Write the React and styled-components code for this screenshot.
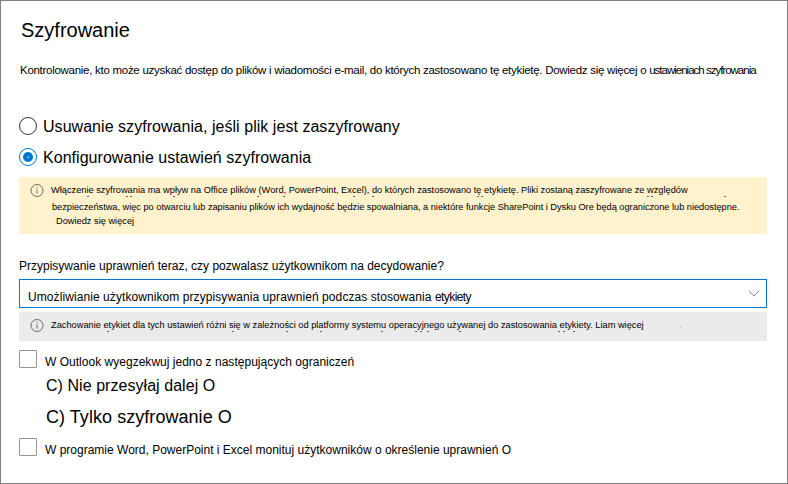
import React from 'react';
import styled, { createGlobalStyle } from 'styled-components';

const GlobalStyle = createGlobalStyle`
  * { box-sizing: border-box; }
  body { margin: 0; background: #fff; }
`;

const Panel = styled.main`
  display: flex;
  flex-direction: column;
  width: 788px;
  height: 484px;
  padding: 17px 20px 0 18px;
  border: 1px solid #808080;
  background: #fff;
  color: #000;
  font-family: 'Liberation Sans', Arial, sans-serif;
  font-size: 12px;
  overflow: hidden;
`;

const Title = styled.h1`
  margin: 0 0 0 2px;
  font-size: 20px;
  font-weight: 400;
  line-height: 24px;
`;

const Text = styled.span`
  font-size: ${(p) => p.$size || 12}px;
  letter-spacing: ${(p) => p.$spacing || 0}px;
  white-space: pre;
`;

const Description = styled.p`
  height: 14px;
  margin: 21px 0 0 1px;
  line-height: 14px;
  font-size: 11.5px;
`;

const RadioGroup = styled.div`
  display: flex;
  flex-direction: column;
  gap: 11px;
  margin-top: 39px;
`;

const RadioRow = styled.label`
  display: flex;
  align-items: center;
  gap: 6px;
  height: 20px;
`;

const RadioLabel = styled(Text)`
  padding-top: 2px;
`;

const RadioIcon = styled.svg`
  width: 18px;
  height: 18px;
  flex: none;
`;

const Notice = styled.section`
  display: flex;
  gap: 7px;
  position: relative;
  flex: none;
  height: ${(p) => p.$height}px;
  margin-top: ${(p) => p.$top}px;
  padding: 6px 0 0 11px;
  background: ${(p) => p.$background};
  font-size: 9.25px;
`;

const InfoIcon = styled.svg`
  width: 14px;
  height: 14px;
  flex: none;
  color: #605e5c;
`;

const NoticeBody = styled.div`
  display: flex;
  flex-direction: column;
`;

const NoticeLine = styled.div`
  height: ${(p) => p.$height || 14}px;
  line-height: 14px;
  padding-left: ${(p) => p.$indent || 0}px;
`;

const Marks = styled.svg`
  position: absolute;
  left: 0;
  top: 0;
  width: 748px;
  height: 28px;
`;

const Question = styled.div`
  height: 14px;
  margin-top: 25px;
  line-height: 14px;
`;

const Select = styled.div`
  display: flex;
  justify-content: space-between;
  flex: none;
  height: 29px;
  margin-top: 6px;
  padding: 0 6px 0 8px;
  border: 1px solid #0078d4;
`;

const SelectValue = styled.div`
  padding-top: 10px;
  line-height: 14px;
`;

const Chevron = styled.svg`
  width: 12px;
  height: 7px;
  margin-top: 10px;
`;

const CheckRow = styled.label`
  display: flex;
  align-items: flex-start;
  gap: 8px;
  height: 19px;
  margin-top: ${(p) => p.$top}px;
`;

const CheckBox = styled.span`
  width: 18px;
  height: 18px;
  flex: none;
  border: 1px solid #979593;
  border-radius: 1px;
`;

const CheckLabel = styled.span`
  padding-top: 5px;
  line-height: 14px;
`;

const Option = styled.div`
  margin: ${(p) => p.$top}px 0 0 27px;
  height: 20px;
  line-height: 20px;
`;

const Radio = ({ checked }) => (
  <RadioIcon viewBox="0 0 18 18">
    <circle cx="9" cy="9" r="8.5" fill="#fff" stroke={checked ? '#0078d4' : '#323130'} />
    {checked && <circle cx="9" cy="9" r="5" fill="#0078d4" />}
    {checked && <circle cx="9.3" cy="9.3" r="0.7" fill="#fff" />}
  </RadioIcon>
);

const Info = () => (
  <InfoIcon viewBox="0 0 14 14" fill="none" stroke="currentColor">
    <circle cx="7" cy="7.5" r="6" strokeWidth="0.9" />
    <path d="M7 6.5v4.2M7 4.2v1.2" strokeWidth="0.9" />
  </InfoIcon>
);

const Flecks = ({ y, points, dot }) => (
  <Marks viewBox="0 0 748 28" aria-hidden="true">
    {points.map((x) => (
      <rect key={x} x={x} y={y} width="2" height="1" fill="#000" opacity="0.6" />
    ))}
    {dot && <rect x={dot} y="14" width="1" height="2" fill="#a9d3f2" />}
  </Marks>
);

export default function App() {
  return (
    <>
      <GlobalStyle />
      <Panel>
        <Title>Szyfrowanie</Title>
        <Description>
          <Text $size={11.5} $spacing={-0.28}>
            {'Kontrolowanie, kto może uzyskać dostęp do plików i wiadomości e-mail, do których zastosowano tę etykietę. Dowiedz się więcej o '}
          </Text>
          <Text $size={11.5} $spacing={-1}>ustawieniach szyfrowania</Text>
        </Description>
        <RadioGroup>
          <RadioRow>
            <Radio />
            <RadioLabel $size={16} $spacing={0.04}>Usuwanie szyfrowania, jeśli plik jest zaszyfrowany</RadioLabel>
          </RadioRow>
          <RadioRow>
            <Radio checked />
            <RadioLabel $size={16} $spacing={0.04}>Konfigurowanie ustawień szyfrowania</RadioLabel>
          </RadioRow>
        </RadioGroup>
        <Notice $top={10} $height={57} $background="#fff2cc">
          <Flecks y={19} points={[68, 107, 111, 154, 238, 264, 334, 353, 458, 462, 628, 632, 705]} />
          <Info />
          <NoticeBody>
            <NoticeLine $height={17}>
              <Text $size={9.25}>Włączenie szyfrowania ma wpływ na Office plików (Word, PowerPoint, Excel), do których zastosowano tę etykietę. Pliki zostaną zaszyfrowane ze względów</Text>
            </NoticeLine>
            <NoticeLine $indent={1}>
              <Text $size={9.25} $spacing={-0.025}>bezpieczeństwa, więc po otwarciu lub zapisaniu plików ich wydajność będzie spowalniana, a niektóre funkcje SharePoint i Dysku Ore będą ograniczone lub niedostępne.</Text>
            </NoticeLine>
            <NoticeLine $indent={5}>
              <Text $size={9.25}>Dowiedz się więcej</Text>
            </NoticeLine>
          </NoticeBody>
        </Notice>
        <Question>
          <Text>Przypisywanie uprawnień teraz, czy pozwalasz użytkownikom na decydowanie?</Text>
        </Question>
        <Select>
          <SelectValue>
            <Text $spacing={0.08}>{'Umożliwianie użytkownikom przypisywania uprawnień podczas stosowania '}</Text>
            <Text $spacing={-0.6}>etykiety</Text>
          </SelectValue>
          <Chevron viewBox="0 0 12 7" fill="none" stroke="#8a8886">
            <path d="M0.8 0.8 6 6 11.2 0.8" />
          </Chevron>
        </Select>
        <Notice $top={4} $height={29} $background="#ebebeb">
          <Flecks y={19} points={[88, 213, 267, 301, 362, 396, 401, 408, 440, 539, 544, 554]} dot={661} />
          <Info />
          <NoticeBody>
            <NoticeLine>
              <Text $size={9.25}>Zachowanie etykiet dla tych ustawień różni się w zależności od platformy systemu operacyjnego używanej do zastosowania etykiety. Liam więcej</Text>
            </NoticeLine>
          </NoticeBody>
        </Notice>
        <CheckRow $top={9}>
          <CheckBox />
          <CheckLabel><Text $spacing={0.02}>W Outlook wyegzekwuj jedno z następujących ograniczeń</Text></CheckLabel>
        </CheckRow>
        <Option $top={7}><Text $size={16} $spacing={0.05}>C) Nie przesyłaj dalej O</Text></Option>
        <Option $top={11}><Text $size={18} $spacing={0.05}>C) Tylko szyfrowanie O</Text></Option>
        <CheckRow $top={11}>
          <CheckBox />
          <CheckLabel><Text>W programie Word, PowerPoint i Excel monituj użytkowników o określenie uprawnień O</Text></CheckLabel>
        </CheckRow>
      </Panel>
    </>
  );
}
